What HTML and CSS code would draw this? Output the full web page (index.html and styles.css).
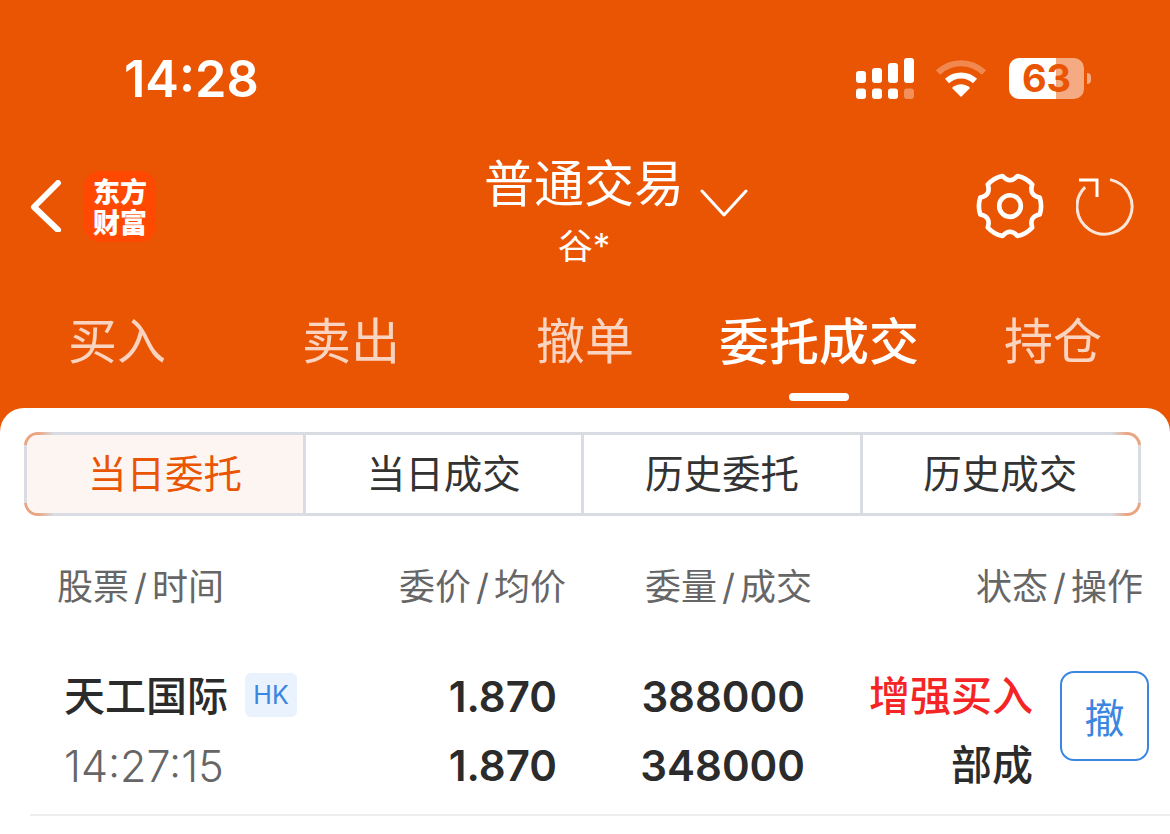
FILE: index.html
```html
<!DOCTYPE html>
<html lang="zh-CN">
<head>
    <meta charset="UTF-8">
    <meta name="viewport" content="width=device-width, initial-scale=1.0">
    <title>普通交易</title>
    <link rel="stylesheet" href="styles.css">
</head>

<body>

    <header class="top">
        <div class="status">
            <span class="time">14:28</span>
            <div class="status-icons">
                <svg class="signal" width="58" height="41" viewBox="0 0 58 41" fill="#fff">
                    <rect x="0" y="13" width="10" height="12" rx="3"/>
                    <rect x="16" y="10" width="10" height="15" rx="3"/>
                    <rect x="32" y="5" width="10" height="20" rx="3"/>
                    <rect x="48" y="0" width="10" height="25" rx="3"/>
                    <rect x="0" y="30.5" width="10" height="10.5" rx="3"/>
                    <rect x="16" y="30.5" width="10" height="10.5" rx="3"/>
                    <rect x="32" y="30.5" width="10" height="10.5" rx="3"/>
                    <rect x="48" y="30.5" width="10" height="10.5" rx="3" opacity="0.35"/>
                </svg>
                <svg class="wifi" width="52" height="40" viewBox="0 0 52 40" fill="none" stroke="#fff">
                    <path d="M3 14.5C16 2 36 2 49 14.5" stroke-width="6" opacity="0.3"/>
                    <path d="M12 23C20 15.5 32 15.5 40 23" stroke-width="6"/>
                    <path d="M17 30C22 25 30 25 35 30L26 39Z" fill="#fff" stroke="none"/>
                </svg>
                <div class="battery">63</div>
                <span class="battery-nub"></span>
            </div>
        </div>

        <div class="nav">
            <div class="nav-left">
                <svg width="32" height="52" viewBox="0 0 32 52" fill="none" stroke="#fff" stroke-width="6" stroke-linecap="round" stroke-linejoin="round">
                    <path d="M28 3L4 27L28 50"/>
                </svg>
                <div class="logo">东方<br>财富</div>
            </div>
            <div class="nav-title">
                <div class="title-text">
                    <div class="title">普通交易</div>
                    <div class="account">谷*</div>
                </div>
                <svg class="title-arrow" width="48" height="30" viewBox="0 0 48 30" fill="none" stroke="#fff" stroke-width="3" stroke-linecap="round" stroke-linejoin="round">
                    <path d="M2 3L24 27L46 3"/>
                </svg>
            </div>
            <div class="nav-right">
                <svg width="70" height="70" viewBox="-34 -34 68 68" fill="none" stroke="#fff" stroke-width="4.5" stroke-linejoin="round">
                    <path d="M28.84 -8.27Q31.6 0 28.84 8.27Q18.2 10.5 21.58 20.84Q15.8 27.37 7.26 29.11Q0 21 -7.26 29.11Q-15.8 27.37 -21.58 20.84Q-18.2 10.5 -28.84 8.27Q-31.6 0 -28.84 -8.27Q-18.2 -10.5 -21.58 -20.84Q-15.8 -27.37 -7.26 -29.11Q0 -21 7.26 -29.11Q15.8 -27.37 21.58 -20.84Q18.2 -10.5 28.84 -8.27Z"/>
                    <circle cx="0" cy="0" r="10.5"/>
                </svg>
                <svg width="60" height="62" viewBox="0 0 60 62" fill="none" stroke="#fff" stroke-width="3">
                    <path d="M34 4.6A27.5 27.5 0 1 1 9.1 12.1" opacity="0.85"/>
                    <path d="M3 5H21V22"/>
                </svg>
            </div>
        </div>

        <nav class="tabs">
            <span class="tab">买入</span>
            <span class="tab">卖出</span>
            <span class="tab">撤单</span>
            <span class="tab active">委托成交</span>
            <span class="tab">持仓</span>
        </nav>
    </header>

    <main class="sheet">
        <div class="segments">
            <span class="seg on">当日委托</span>
            <span class="seg">当日成交</span>
            <span class="seg">历史委托</span>
            <span class="seg">历史成交</span>
        </div>

        <div class="table-head">
            <span>股票<i class="sep">/</i>时间</span>
            <span class="num">委价<i class="sep">/</i>均价</span>
            <span class="num">委量<i class="sep">/</i>成交</span>
            <span class="num">状态<i class="sep">/</i>操作</span>
        </div>

        <div class="order">
            <div class="stock">
                <span class="stock-name">天工国际</span>
                <span class="market">HK</span>
            </div>
            <div class="val">1.870</div>
            <div class="val">388000</div>
            <div class="order-status red">增强买入</div>
            <button class="cancel">撤</button>
            <div class="order-time">14:27:15</div>
            <div class="val">1.870</div>
            <div class="val">348000</div>
            <div class="order-status">部成</div>
        </div>
    </main>

</body>
</html>
```

FILE: styles.css
```css
body {
    margin: 0;
    height: 834px;
    overflow: hidden;
    background: white;
    color: #2b2b2b;
    font-family: Inter, "Noto Sans CJK SC", sans-serif;
}
.top {
    background-color: #ea5504;
    height: 432px;
    color: white;
}
.status {
    height: 156px;
    padding: 0 79px 0 124px;
    display: flex;
    justify-content: space-between;
    align-items: center;
}
.time {
    font-size: 50.5px;
    font-weight: 600;
}
.status-icons {
    display: flex;
    align-items: center;
}
.signal {
    margin-right: 21px;
}
.wifi {
    margin-right: 22px;
}
.battery {
    width: 75px;
    height: 41px;
    border-radius: 10px;
    background: linear-gradient(to right, white 47px, rgba(255, 255, 255, 0.5) 47px);
    color: #ea5504;
    font-size: 38px;
    font-weight: 700;
    line-height: 41px;
    text-align: center;
}
.battery-nub {
    width: 4px;
    height: 11px;
    margin-left: 3px;
    border-radius: 0 6px 6px 0;
    background: rgba(255, 255, 255, 0.5);
}

.nav {
    height: 116px;
    display: grid;
    grid-template-columns: 487px 1fr auto;
}
.nav-left {
    display: flex;
    align-items: center;
    height: 100px;
    padding-left: 30px;
}
.logo {
    width: 72px;
    height: 71px;
    padding-top: 3px;
    box-sizing: border-box;
    margin-left: 22px;
    border-radius: 16px;
    background: #ff4800;
    font-size: 27px;
    font-weight: 900;
    line-height: 31px;
    text-align: center;
    display: flex;
    align-items: center;
    justify-content: center;
}
.nav-title {
    display: flex;
}
.title-text {
    width: 194px;
    text-align: center;
    white-space: nowrap;
}
.title {
    margin: 0 -4px;
    font-size: 50px;
    line-height: 56px;
}
.account {
    font-size: 35px;
    line-height: 44px;
    margin-top: 12px;
}
.title-arrow {
    margin: 32px 0 0 19px;
}
.nav-right {
    display: flex;
    align-items: center;
    gap: 31.5px;
    height: 100px;
    padding-right: 34px;
}

.tabs {
    display: flex;
    height: 136px;
}
.tab {
    flex: 1;
    height: 128px;
    padding-top: 36px;
    box-sizing: border-box;
    font-size: 49px;
    line-height: 68px;
    text-align: center;
    color: rgba(255, 255, 255, 0.75);
}
.tab.active {
    color: white;
    font-size: 50px;
    font-weight: 500;
    position: relative;
}
.tab.active::after {
    content: "";
    position: absolute;
    left: 50%;
    bottom: -1px;
    width: 60px;
    height: 8px;
    margin-left: -30px;
    border-radius: 4px;
    background: white;
}

.sheet {
    margin-top: -24px;
    position: relative;
    height: 426px;
    background: white;
    border-radius: 24px 24px 0 0;
}
.segments {
    position: relative;
    top: 24px;
    margin: 0 29px 0 24px;
    height: 78px;
    display: flex;
    border: 3px solid transparent;
    border-radius: 14px;
    background:
        linear-gradient(white, white) padding-box,
        linear-gradient(#d9dce3, #d9dce3) center / 100% calc(100% - 26px) no-repeat border-box,
        linear-gradient(to right, #e9a582 14px, #d9dce3 30px, #d9dce3 calc(100% - 30px), #e9a582 calc(100% - 14px)) border-box;
}
.seg {
    flex: 1;
    font-size: 38.5px;
    line-height: 78px;
    text-align: center;
    color: #333;
    border-left: 3px solid #d9dce3;
}
.seg:first-child {
    border-left: none;
    flex: 0 0 276px;
}
.seg.on {
    color: #ea5504;
    background: #fdf5f2;
    border-radius: 11px 0 0 11px;
}

.table-head {
    margin-top: 70px;
    padding: 0 27px 0 57px;
    display: grid;
    grid-template-columns: 243px 266px 246px 331px;
    font-size: 36px;
    line-height: 50px;
    color: #666;
}
.sep {
    margin: 0 5px;
    font-style: normal;
}
.num {
    text-align: right;
}

.order {
    margin: 50px 0 0 30px;
    padding: 0 21px 14px 34px;
    display: grid;
    grid-template-columns: 256px 237px 248px 228px 89px;
    grid-template-rows: 69px 69px;
    border-bottom: 2px solid #eeeeee;
    align-items: center;
    font-size: 41px;
}
.stock {
    display: flex;
    align-items: center;
    margin-bottom: 4px;
}
.stock-name {
    font-weight: 500;
    margin-bottom: 4px;
}
.market {
    margin-left: 17px;
    width: 52px;
    height: 44px;
    border-radius: 6px;
    background: #e9f2fd;
    color: #3a86e0;
    font-size: 25px;
    line-height: 44px;
    text-align: center;
}
.order-time {
    color: #666;
    font-size: 43px;
    font-weight: 300;
}
.val {
    font-size: 42px;
    font-weight: 600;
    text-align: right;
}
.order-status {
    font-weight: 500;
    text-align: right;
    margin-bottom: 7px;
}
.red {
    color: #f52525;
}
.cancel {
    grid-column: 5;
    grid-row: 1 / span 2;
    align-self: start;
    margin-top: 9px;
    margin-left: 27px;
    width: 89px;
    height: 90px;
    padding: 0;
    background: white;
    border: 2px solid #3a86e0;
    border-radius: 14px;
    color: #3a86e0;
    font-family: inherit;
    font-size: 40px;
}
```
